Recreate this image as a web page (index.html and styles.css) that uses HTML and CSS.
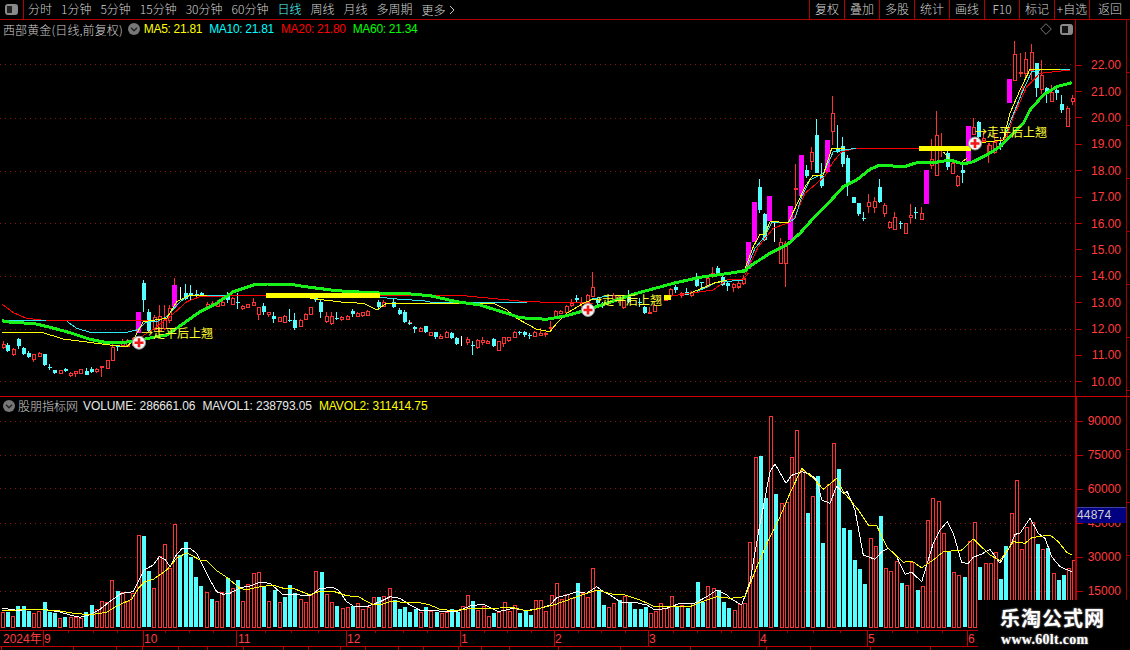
FILE: index.html
```html
<!DOCTYPE html>
<html lang="zh">
<head>
<meta charset="utf-8">
<title>西部黄金 日线</title>
<link rel="stylesheet" href="styles.css">
</head>
<body>
<div class="app">
  <header class="toolbar">
    <div class="toggle-cell">
      <svg class="toggle-icon" viewBox="0 0 13 11"><rect x="0.5" y="0.5" width="12" height="10" rx="2" fill="#8a8a8a" stroke="#8a8a8a"/><rect x="2" y="2" width="5" height="7" fill="#222"/></svg>
    </div>
    <nav class="tabs">
      <span>分时</span><span>1分钟</span><span>5分钟</span><span>15分钟</span><span>30分钟</span><span>60分钟</span>
      <span class="tab-active">日线</span><span>周线</span><span>月线</span><span>多周期</span>
      <span class="tab-more">更多<svg class="more-arrow" viewBox="0 0 6 10"><path d="M1 1l4 4-4 4" fill="none" stroke="#c8c8c8"/></svg></span>
    </nav>
    <nav class="actions">
      <span>复权</span><span>叠加</span><span>多股</span><span>统计</span><span>画线</span><span>F10</span><span>标记</span><span>+自选</span><span class="action-last">返回</span>
    </nav>
  </header>

  <section class="pane pane-price">
    <div class="pane-main">
      <div class="legend">
        <span class="legend-title title-price">西部黄金(日线,前复权)</span>
        <svg class="chev" viewBox="0 0 12 12"><circle cx="6" cy="6" r="6" fill="#777"/><path d="M3 4.8l3 3 3-3" fill="none" stroke="#222" stroke-width="1.4"/></svg>
        <span class="ma ma-tight c-yellow">MA5: 21.81</span>
        <span class="ma ma-tight c-cyan">MA10: 21.81</span>
        <span class="ma ma-tight c-red">MA20: 21.80</span>
        <span class="ma ma-tight c-green">MA60: 21.34</span>
        <span class="legend-tools">
          <svg class="diamond" viewBox="0 0 12 12"><path d="M6 .7L11.3 6 6 11.3.7 6z" fill="none" stroke="#777"/></svg>
          <svg class="split" viewBox="0 0 13 11"><rect x="0.5" y="0.5" width="12" height="10" rx="2" fill="#8a8a8a" stroke="#8a8a8a"/><rect x="2" y="2" width="6" height="7" fill="#111"/></svg>
        </span>
      </div>
      <svg id="priceChart" class="chart chart-price" viewBox="0 38 1075 358"></svg>
    </div>
    <div class="axis axis-price">
      <div class="tick">22.00</div><div class="tick">21.00</div><div class="tick">20.00</div><div class="tick">19.00</div>
      <div class="tick">18.00</div><div class="tick">17.00</div><div class="tick">16.00</div><div class="tick">15.00</div>
      <div class="tick">14.00</div><div class="tick">13.00</div><div class="tick">12.00</div><div class="tick">11.00</div>
      <div class="tick">10.00</div>
    </div>
  </section>

  <section class="pane pane-volume">
    <div class="pane-main">
      <div class="legend">
        <svg class="chev chev-vol" viewBox="0 0 12 12"><circle cx="6" cy="6" r="6" fill="#777"/><path d="M3 4.8l3 3 3-3" fill="none" stroke="#222" stroke-width="1.4"/></svg>
        <span class="legend-title">股朋指标网</span>
        <span class="ma c-white">VOLUME: 286661.06</span>
        <span class="ma c-white">MAVOL1: 238793.05</span>
        <span class="ma c-yellow">MAVOL2: 311414.75</span>
      </div>
      <svg id="volumeChart" class="chart chart-volume" viewBox="0 414 1075 216"></svg>
    </div>
    <div class="axis axis-volume">
      <div class="tick">90000</div><div class="tick">75000</div><div class="tick">60000</div>
      <div class="tick">45000</div><div class="tick">30000</div><div class="tick">15000</div>
      <div class="cursor-value">44874</div>
    </div>
  </section>

  <svg id="timeAxis" class="time-axis" viewBox="0 630 1130 20"></svg>

  <aside class="watermark">
    <div class="wm-title">乐淘公式网</div>
    <div class="wm-url">www.60lt.com</div>
  </aside>
</div>
<script src="main.js"></script>
</body>
</html>
```

FILE: styles.css
```css
* { box-sizing: border-box; }
html, body { margin: 0; padding: 0; background: #000; }
body {
  width: 1130px;
  height: 650px;
  overflow: hidden;
  font-family: "Liberation Sans", "Noto Sans CJK SC", sans-serif;
  font-size: 12px;
  color: #d4d4d4;
}
.app { position: relative; width: 1130px; height: 650px; display: flex; flex-direction: column; }

/* toolbar */
.toolbar { height: 20px; flex: none; display: flex; align-items: stretch; border-bottom: 1px solid #b00000; line-height: 18px; }
.toggle-cell { width: 24px; flex: none; display: flex; align-items: center; justify-content: center; border-right: 1px solid #b00000; }
.toggle-icon { width: 13px; height: 11px; }
.tabs { flex: 1; display: flex; gap: 9px; padding-left: 4px; font-family: "Noto Sans CJK SC", sans-serif; font-weight: 300; }
.tab-active { color: #54ffff; }
.tab-more { display: flex; align-items: center; gap: 4px; }
.more-arrow { width: 6px; height: 10px; }
.actions { display: flex; font-family: "Noto Sans CJK SC", sans-serif; font-weight: 300; }
.actions span { width: 35px; text-align: center; border-left: 1px solid #b00000; white-space: nowrap; }
.actions .action-last { width: 41px; }

/* panes */
.pane { display: flex; flex: none; }
.pane-price { height: 377px; border-bottom: 1px solid #d00000; }
.pane-volume { height: 233px; }
.pane-main { width: 1075px; flex: none; display: flex; flex-direction: column; }
.legend { display: flex; align-items: center; height: 18px; padding-left: 3px; white-space: nowrap; flex: none; }
.pane-volume .legend { height: 17px; }
.legend-title { font-family: "Noto Sans CJK SC", sans-serif; font-weight: 300; color: #cfcfcf; margin-right: 5px; }
.title-price { letter-spacing: 0.1px; margin-right: 5px; }
.chev { width: 12px; height: 12px; margin-right: 4px; flex: none; }
.chev-vol { margin-right: 3px; }
.ma { margin-right: 7px; letter-spacing: -0.1px; }
.ma-tight { letter-spacing: -0.3px; margin-right: 7px; }
.c-yellow { color: #ffff00; }
.c-cyan { color: #00ffff; }
.c-red { color: #ff0000; }
.c-green { color: #00ff00; }
.c-white { color: #e8e8e8; }
.legend-tools { margin-left: auto; display: flex; align-items: center; gap: 8px; padding-right: 2px; }
.diamond { width: 12px; height: 12px; }
.split { width: 13px; height: 11px; }
.chart { display: block; flex: none; width: 1075px; }
.chart-price { height: 358px; }
.chart-volume { height: 216px; }

/* axes */
.axis { position: relative; flex: 1; border-right: 1px solid #a00000; color: #ff3c3c; margin-right: 3px; }
.axis::after {
  content: ""; position: absolute; top: 0; bottom: 0; right: -4px; width: 3px;
  background: repeating-linear-gradient(to bottom, transparent 0 52px, #a00000 52px 53px);
}
.axis-price { border-left: 1px solid #b00000; padding-top: 32px; }
.axis-volume { border-left: 2px solid #c00000; padding-top: 7px; }
.tick { display: flex; align-items: center; justify-content: flex-end; padding-right: 5px; }
.tick::before { content: ""; width: 6px; height: 1px; background: #c00000; margin-right: auto; }
.axis-price .tick { height: 26.4px; }
.axis-volume .tick { height: 34px; }
.cursor-value {
  position: absolute; left: 0; right: 0; top: 110px; height: 16px;
  background: #000080; color: #d0d0d0; line-height: 15px;
  border-top: 1px solid #4040a0; letter-spacing: 0.2px;
}

/* charts */
.grid-line { stroke: #8c1616; stroke-dasharray: 1 4; stroke-width: 1; fill: none; shape-rendering: crispEdges; }
.wick { stroke: #ff3232; stroke-width: 1; shape-rendering: crispEdges; }
.wick-cyan { stroke: #54ffff; stroke-width: 1; shape-rendering: crispEdges; }
.wick-white { stroke: #ffffff; stroke-width: 1; shape-rendering: crispEdges; }
.body-red { fill: #000; stroke: #ff3232; stroke-width: 1; shape-rendering: crispEdges; }
.body-cyan { fill: #54ffff; shape-rendering: crispEdges; }
.body-magenta { fill: #ff00ff; shape-rendering: crispEdges; }
.line { fill: none; stroke-width: 1; stroke-linejoin: round; shape-rendering: crispEdges; }
.line-red { stroke: #ff0000; }
.line-cyan { stroke: #30e8f0; }
.line-yellow { stroke: #ffff00; }
.line-white { stroke: #ffffff; }
.line-green { stroke: #19f219; stroke-width: 3; }
.line-flat { stroke: #ffff00; stroke-width: 5; }
.signal-disc { fill: #f4f4f4; stroke: #9a9a9a; stroke-width: 1; }
.signal-plus { stroke: #f01818; stroke-width: 2.6; fill: none; }
.signal-text { fill: #ffff30; font-family: "Noto Sans CJK SC", sans-serif; font-size: 12px; font-weight: 400; }

/* time axis */
.time-axis { display: block; width: 1130px; height: 20px; flex: none; }
.time-rule { stroke: #c00000; stroke-width: 1; shape-rendering: crispEdges; }
.time-mark { stroke: #a00000; stroke-width: 1; shape-rendering: crispEdges; }
.time-label { fill: #ff3c3c; font-family: "Liberation Sans", "Noto Sans CJK SC", sans-serif; font-size: 12px; }

/* watermark */
.watermark {
  position: absolute; right: 0; bottom: 0; width: 152px; height: 50px;
  background: #000; padding: 6px 0 0 22px;
}
.wm-title {
  font-family: "Noto Sans CJK SC", sans-serif; font-weight: 700; font-size: 20px; line-height: 24px;
  letter-spacing: 1px; color: #fff; text-shadow: 0 0 2px #bbb;
}
.wm-url {
  font-family: "Liberation Serif", serif; font-weight: 700; font-size: 14px; line-height: 19px;
  color: #fff; text-shadow: 0 0 2px #aaa; letter-spacing: 0.3px; margin-left: 1px;
}
```

FILE: main.js
```js
const NS = "http://www.w3.org/2000/svg";
function el(parent, name, attrs, text) {
  const n = document.createElementNS(NS, name);
  for (const k in attrs) n.setAttribute(k, attrs[k]);
  if (text) n.textContent = text;
  parent.appendChild(n);
  return n;
}
// Readings are stored in 3x crop coordinates: [originX, originY, "x,y ..."]
function pts(seg) {
  return seg.map(s => s[2].trim().split(/\s+/).map(p => {
    const a = p.split(",").map(Number);
    return (s[0] + a[0] / 3).toFixed(1) + "," + (s[1] + a[1] / 3).toFixed(1);
  }).join(" ")).join(" ");
}
function line(svg, cls, seg) { el(svg, "polyline", { class: "line " + cls, points: pts(seg) }); }

/* ---------- price pane ---------- */
const price = document.getElementById("priceChart");
[64, 117.5, 170.5, 223, 276, 328.5, 380.5].forEach(y => {
  const yy = Math.round(y) + 0.5;
  el(price, "line", { class: "grid-line", x1: 0, x2: 1075, y1: yy, y2: yy });
});

const candleSets = [
 [0, 260, `8 R 251 261 243 266;22 C 254 274 250 276;40 R 268 282 265 288;55 C 238 258 234 266;70 C 265 282 262 285;85 C 278 292 274 294;100 R 283 296 281 305;118 R 279 288 276 292;133 C 282 315 282 318;148 C 320 324 313 330;163 C 331 339 331 342;181 R 331 338 331 339;196 C 327 332 324 335;211 R 339 346 336 351;226 R 334 338 334 351;241 R 328 338 326 342;259 C 334 345 325 345;274 C 326 337 320 339;289 R 326 334 324 340;304 R 319 322 319 350;320 R 301 325 301 326;337 R 260 300 250 300;352 C 258 260 256 272;367 R 250 256 236 258;382 R 240 258 238 260;400 R 235 255 230 258`],
 [130, 270, `25 M 125 188 125 188;40 C 40 90 30 125;55 C 125 183 118 190;72 R 140 178 135 182;88 R 138 180 105 180;103 R 150 175 105 180;118 R 115 150 105 160;133 M 45 110 25 110;150 W 50 88 50 88;165 C 70 88 42 90;181 C 70 78 45 90;197 C 72 78 60 88;212 C 70 78 65 78;230 R 102 108 97 112;245 R 98 104 92 108;260 R 97 108 90 110;275 R 97 105 90 107;292 C 75 90 65 100;307 R 85 102 80 105;322 C 97 100 70 118;337 R 107 113 105 120;352 R 103 110 103 110;370 R 96 105 85 108;385 R 112 133 110 150;400 C 108 125 100 135;415 R 127 133 125 140;430 C 138 148 125 158;448 R 142 154 140 156;463 R 138 155 135 157;478 C 150 153 118 155;493 C 150 175 130 180;511 R 150 168 148 172;526 R 132 148 130 150;541 R 112 133 110 135;556 C 85 90 80 95;571 C 95 125 87 145;589 R 138 153 125 158;604 R 138 160 125 165;619 C 145 148 125 150;634 R 140 146 138 152;652 R 137 148 135 150;667 C 122 133 118 140;682 R 128 138 125 142;697 R 127 134 125 140;712 R 123 134 120 137;745 C 95 110 90 120;760 R 95 108 90 112;790 C 95 110 85 113;808 C 120 130 115 135;823 C 125 155 120 160;838 R 155 160 150 160`],
 [380, 250, `58 C 180 192 175 195;73 C 186 216 180 218;88 C 218 220 210 225;103 C 230 236 228 248;121 R 234 242 232 243;136 C 228 246 228 248;151 R 247 255 245 258;166 C 247 260 245 268;181 R 258 263 252 263;199 R 246 260 244 262;214 C 250 264 246 268;229 C 264 282 260 284;244 W 258 288 258 288;262 R 268 275 262 285;277 C 285 287 272 315;292 R 270 290 268 298;307 R 270 277 262 285;322 R 272 280 270 282;340 C 268 288 264 290;355 R 274 300 272 304;370 R 262 278 260 292;385 R 262 270 260 277;403 R 246 260 244 262;418 C 246 250 244 254;433 C 247 255 244 262;448 C 254 256 250 268;463 R 247 258 244 261;481 R 250 255 235 255;496 R 250 252 245 262;511 R 230 232 212 240;526 R 184 202 180 205;541 R 184 190 180 190;559 R 168 186 165 188;574 R 160 165 148 172;589 C 143 150 135 157;604 R 155 160 142 170;622 R 135 155 132 158;637 R 112 137 65 140;652 C 150 160 145 165;667 C 160 165 155 175;700 R 135 150 130 155;715 R 140 150 138 160;730 R 150 170 145 176;745 C 135 155 120 160;778 C 155 160 145 170;793 C 172 188 168 192;808 R 185 187 170 190;823 R 165 183 162 185;856 R 143 150 140 152;871 R 118 136 115 138;886 C 110 120 105 130;904 R 128 135 125 145;919 C 126 135 115 136;934 R 125 135 123 142;949 C 82 108 68 112;964 C 95 100 95 120;981 R 85 108 82 115;997 R 68 75 52 85;1012 C 55 70 48 75;1027 C 80 105 75 108;1042 C 98 108 95 122;1060 R 107 112 98 125;1075 R 98 110 92 118;1090 R 85 100 75 105`],
 [730, 90, `10 R 582 590 578 595;25 R 580 588 572 596;40 R 568 580 560 585;55 M 456 538 456 538;73 M 336 456 336 456;88 C 292 360 268 368;103 C 372 450 368 452;118 M 318 392 318 392;133 W 398 455 398 455;151 R 455 520 445 522;166 R 458 518 452 590;181 M 348 450 348 450;196 R 295 298 222 350;214 M 195 318 195 318;229 C 240 258 225 265;244 R 186 212 170 240;259 C 135 248 88 250;274 C 258 288 220 295;292 M 150 245 150 245;307 R 68 122 18 165;322 C 175 185 105 188;337 C 168 222 140 232;352 C 204 280 195 318;370 C 322 338 320 340;385 C 338 372 338 378;400 C 385 388 365 392;415 R 337 347 312 368;433 R 332 352 322 368;448 C 292 336 268 338;463 R 345 368 340 382;478 R 396 410 392 416;493 R 382 418 365 420;511 C 398 402 394 418;526 R 400 428 398 430;541 R 376 382 342 402;556 C 366 368 352 388;574 R 370 388 350 388;589 M 240 342 240 342;604 R 208 226 146 236;619 R 136 254 62 256;634 R 170 180 128 200;652 C 190 232 180 240;667 R 220 248 215 250;682 R 258 285 255 292;697 C 240 250 225 280;715 M 108 218 108 218;730 R 110 132 85 136;745 C 95 140 92 145;760 R 145 150 125 150;775 R 165 190 160 218;793 R 160 185 130 192`],
 [960, 30, `88 R 345 365 340 375;103 R 335 360 330 370;120 C 340 352 320 360;135 R 312 330 295 340;148 M 147 218 147 218;163 R 72 150 32 152;181 R 125 128 70 140;196 R 88 130 65 150;212 R 65 120 42 150;227 C 100 175 100 200;244 R 135 178 90 192;259 C 175 190 172 220;274 R 185 212 165 215;289 C 180 190 165 210;304 C 222 240 195 248;322 R 235 287 228 288;337 R 205 212 195 225`]
];

candleSets.forEach(([ox, oy, data]) => {
  data.split(";").forEach(row => {
    const p = row.trim().split(/\s+/);
    const cx = Math.round(ox + (+p[0]) / 3);
    const [t, b, h, l] = p.slice(2).map(v => Math.round(oy + (+v) / 3));
    const kind = p[1];
    const wickCls = kind === "C" ? "wick-cyan" : kind === "W" ? "wick-white" : "wick";
    const lo = l === undefined || isNaN(l) ? b : l;
    el(price, "line", { class: wickCls, x1: cx + 0.5, x2: cx + 0.5, y1: h, y2: Math.max(lo, b) });
    if (kind === "R") el(price, "rect", { class: "body-red", x: cx - 0.5, y: t + 0.5, width: 3, height: Math.max(1, b - t) });
    if (kind === "C") el(price, "rect", { class: "body-cyan", x: cx - 1, y: t, width: 4, height: Math.max(1, b - t) });
    if (kind === "M") el(price, "rect", { class: "body-magenta", x: cx - 2, y: t, width: 5, height: b - t });
  });
});

// moving averages
[
 [[0,260,"5,132 40,158 80,175 140,182 450,182"]],
 [[0,260,"410,240 470,200 510,170 560,125 600,110 800,105"],[130,270,"500,76 760,76 840,72"]],
 [[380,250,"0,137 250,137 440,155 640,160"]],
 [[380,250,"860,140 1000,120 1040,90 1090,88 1105,70"]],
 [[730,90,"45,555 85,470 130,415 175,398 190,390 225,310 260,280 285,258 310,215 335,185 378,175 570,175"]],
 [[730,90,"722,155 800,155 830,140 880,-10"],[960,30,"165,250 200,170 240,130 330,120"]]
].forEach(s => line(price, "line-red", s));
[
 [[0,260,"15,182 140,180"]],
 [[0,260,"200,184 230,205 270,217 380,217 410,210 440,185 470,185 500,170 540,125 570,105 680,105"]],
 [[380,250,"0,142 60,148 130,152 160,158 440,158"]],
 [[380,250,"630,148 700,135"]],
 [[380,250,"950,125 1010,97 1090,90"]],
 [[730,90,"45,545 75,475 100,445 125,398 175,398 195,385 215,320 240,270 280,250 310,185 378,175"]],
 [[960,30,"60,338 130,330 155,265 185,190 215,125 250,118 330,118"]]
].forEach(s => line(price, "line-cyan", s));
[
 [[0,260,"5,217 125,217 190,237 330,255 380,260 400,240 430,185 450,182 500,175 530,125 570,105 620,105"]],
 [[130,270,"540,85 640,97 700,100 740,120 770,100 840,100"]],
 [[380,250,"20,160 340,160 380,180 410,205 470,238 510,245 530,220 560,190 610,160 640,147"]],
 [[380,250,"930,130 1000,100 1040,90"]],
 [[730,90,"40,550 70,470 90,432 105,432 120,395 175,397 200,345 225,290 250,255 280,255 305,175 345,175"]],
 [[730,90,"640,185 660,210 690,220 710,205"]],
 [[960,30,"60,338 130,330 150,250 180,180 210,118 300,118"]]
].forEach(s => line(price, "line-yellow", s));
line(price, "line-green", [
 [0,260,"5,182 40,188 100,190 150,202 210,218 270,238 310,246 380,246 420,240 460,232 500,225 540,198 600,155 650,130"],
 [130,270,"310,65 370,45 410,42 480,43 540,52 620,62 720,68 830,72"],
 [380,250,"70,130 150,137 230,155 300,165 380,190 420,203 500,208 560,197 620,180 680,160 760,133 880,100 960,82 1060,68 1100,60"],
 [730,90,"40,545 65,525 120,490 170,465 210,430 250,385 290,345 340,290 380,270 420,238 450,225 490,228 530,228 560,218 610,218 660,210 700,222 730,215 770,195 810,170 840,140 880,100"],
 [960,30,"210,240 250,195 290,170 335,158"]
]);

// flat segments and signals
[[266, 380, 295.5], [664, 671, 297.5], [919, 971, 148]].forEach(([a, b, y]) => {
  el(price, "line", { class: "line line-flat", x1: a, x2: b, y1: y, y2: y });
});
[[139, 342.7, 141, 338], [588, 310, 590, 305], [975, 143.5, 975, 137]].forEach(([x, y, tx, ty]) => {
  el(price, "circle", { class: "signal-disc", cx: x, cy: y, r: 6.5 });
  el(price, "path", { class: "signal-plus", d: `M${x - 4.5} ${y}h9M${x} ${y - 4.5}v9` });
  el(price, "text", { class: "signal-text", x: tx, y: ty }, "→走平后上翘");
});

/* ---------- volume pane ---------- */
const volume = document.getElementById("volumeChart");
[421, 454.5, 488, 523, 557, 591].forEach(y => {
  const yy = Math.round(y) + 0.5;
  el(volume, "line", { class: "grid-line", x1: 0, x2: 1075, y1: yy, y2: yy });
});
const volSets = [
 [500, "R335 C335 R348 C318 C318 C332 R340 R334 C306 C336 C340 R355 C351 R351 R350 R353 C336 C315 R328 R303 R306 R240 C273 R276 R304 R280 R105 C108 C213 R264 R168 R132 R204 R72 C165 C126 C171 C231 C258 R276 C297 R303 R276 C234 R264 C240 R303 R252 R219 R216 C258 R303 C270 R306 C291 C255 C279 R297 R306 R285 R213 C216 R282 R306 C318 R324 R321 C318 R309 R327 R321 R291 C291 R288 R264 C300 C327"],
 [540, "C201 C216 C207 R216 C201 R213 C216 R219 R216 C207 C216 R198 R165 C183 R210 R198 R228 C219 R216 R186 R213 R195 C219 C210 C225 R180 R180 R213 R165 R129 R177 R162 R174 C129 R159 R171 R84 C150 C195 R201 R189 C180 R168 C189 C207 C207 C201 R219 R213 R189 R204 R168 C201 R195 C204 R189 C126 C186 R138 R144 C150 C186 C204 R210 R192"],
 [400, "R610 R426 R172 C168 C294 R48 C282 R309 R306 R171 R90 R210 C339 R288 C228 C429 R252 R129 C207 C384 C390 C480 C507 C552 R414 R438 C348 R504 R513 R483 C549 R555 R486 C570 R558 R360 R294 R303 R399 C453 R516 R525 C531 R423 R366 C501 R489 R489 R456 C537 C438 R339 R240 R447 R381 R366 C432 R447 C444 R519 C540 C525 R504 R480"]
];
let vi = 0;
volSets.forEach(([oy, data]) => {
  data.split(" ").forEach(tok => {
    const x = Math.round(1.7 + 5.228 * vi);
    const top = Math.round(oy + (+tok.slice(1)) / 3);
    if (tok[0] === "R") el(volume, "rect", { class: "body-red", x: x - 0.5, y: top + 0.5, width: 3, height: 627 - top - 0.5 });
    else el(volume, "rect", { class: "body-cyan", x: x - 1, y: top, width: 4, height: 627 - top });
    vi++;
  });
});
line(volume, "line-white", [
 [0,500,"5,325 33,328 50,331 100,328 140,329 180,336 210,345 240,352 270,344 300,328 335,300 365,280 400,275 415,245 432,210 460,195 478,170 495,178 510,200 525,170 545,146 570,145 590,160 610,200 630,240 650,275 670,283 690,280 720,263 750,258 780,247 810,250 850,285 880,283 930,288 960,265 1000,263 1015,270 1040,305 1060,318 1100,320 1140,305 1170,290"],
 [400,540,"0,175 30,195 60,211 110,212 130,215 170,215 210,198 250,192 295,215 340,205 380,212 420,205 450,195 470,173 500,165 530,155 560,160 590,140 610,155 630,165 665,188 710,188 740,195 765,210 800,205 840,190 880,192 920,170 950,150 980,165"],
 [730,400,"0,595 35,615 60,545 85,400 120,215 135,192 168,250 185,226 215,215 240,222 260,240 275,300 300,310 320,258 340,280 352,275 375,330 400,465 435,478 455,455 475,445 500,470 525,523 545,517 575,545 610,430 630,390 652,365 670,400 695,488 715,490 730,472 755,462 780,448 810,490 840,440 855,403 870,400 900,355 925,400 945,415 965,470 990,500 1025,515"]
]);
line(volume, "line-yellow", [
 [0,500,"5,332 50,330 100,328 140,330 180,333 220,340 270,344 320,337 350,318 395,298 415,265 435,245 460,238 500,210 530,175 560,158 600,180 620,182 650,212 680,232 720,265 740,270 770,262 820,255 850,265 880,265 930,285 960,274 1000,274 1040,287 1075,290 1115,312 1150,312 1170,305"],
 [400,540,"0,186 50,186 90,195 120,208 160,212 220,205 300,204 340,203 380,213 420,205 470,192 530,170 590,150 640,163 670,163 720,180 760,198 830,198 870,200 900,187 950,170"],
 [730,400,"0,595 45,590 85,490 120,410 150,350 180,280 215,205 250,235 280,268 320,235 340,275 385,330 415,375 440,377 470,440 520,487 545,483 575,503 610,480 640,455 695,450 730,417 780,465 810,482 850,425 885,430 905,413 960,405 985,425 1010,457 1025,465"]
]);

/* ---------- time axis ---------- */
const time = document.getElementById("timeAxis");
el(time, "line", { class: "time-rule", x1: 0, x2: 978, y1: 630.5, y2: 630.5 });
el(time, "line", { class: "time-rule", x1: 0, x2: 978, y1: 646.5, y2: 646.5 });
[["2024年", 3, null], ["9", 44, 43], ["10", 144, 143], ["11", 238, 236], ["12", 347, 346], ["1", 461, 460], ["2", 555, 554], ["3", 649, 648], ["4", 760, 758.5], ["5", 868, 867], ["6", 968, 967]].forEach(([t, x, mark]) => {
  el(time, "text", { class: "time-label", x: x, y: 643 }, t);
  if (mark !== null) {
    const m = Math.round(mark) + 0.5;
    el(time, "line", { class: "time-rule", x1: m, x2: m, y1: 631, y2: 646 });
  }
});
[68, 93, 117, 165, 189, 213, 265, 291, 318, 375, 403, 427, 484, 507, 531, 578, 601, 625, 673, 697, 721, 731, 787, 813, 840, 892, 917, 942].forEach(x => {
  const m = x + 0.5;
  el(time, "line", { class: "time-mark", x1: m, x2: m, y1: 631, y2: 633 });
});
[1, 73, 116, 142, 178, 207, 243, 283, 308, 340, 365, 398, 423, 458, 481, 509, 558, 620, 690, 766, 810, 870, 930].forEach(x => {
  const m = x + 0.5;
  el(time, "line", { class: "time-rule", x1: m, x2: m, y1: 647, y2: 650 });
});
```
